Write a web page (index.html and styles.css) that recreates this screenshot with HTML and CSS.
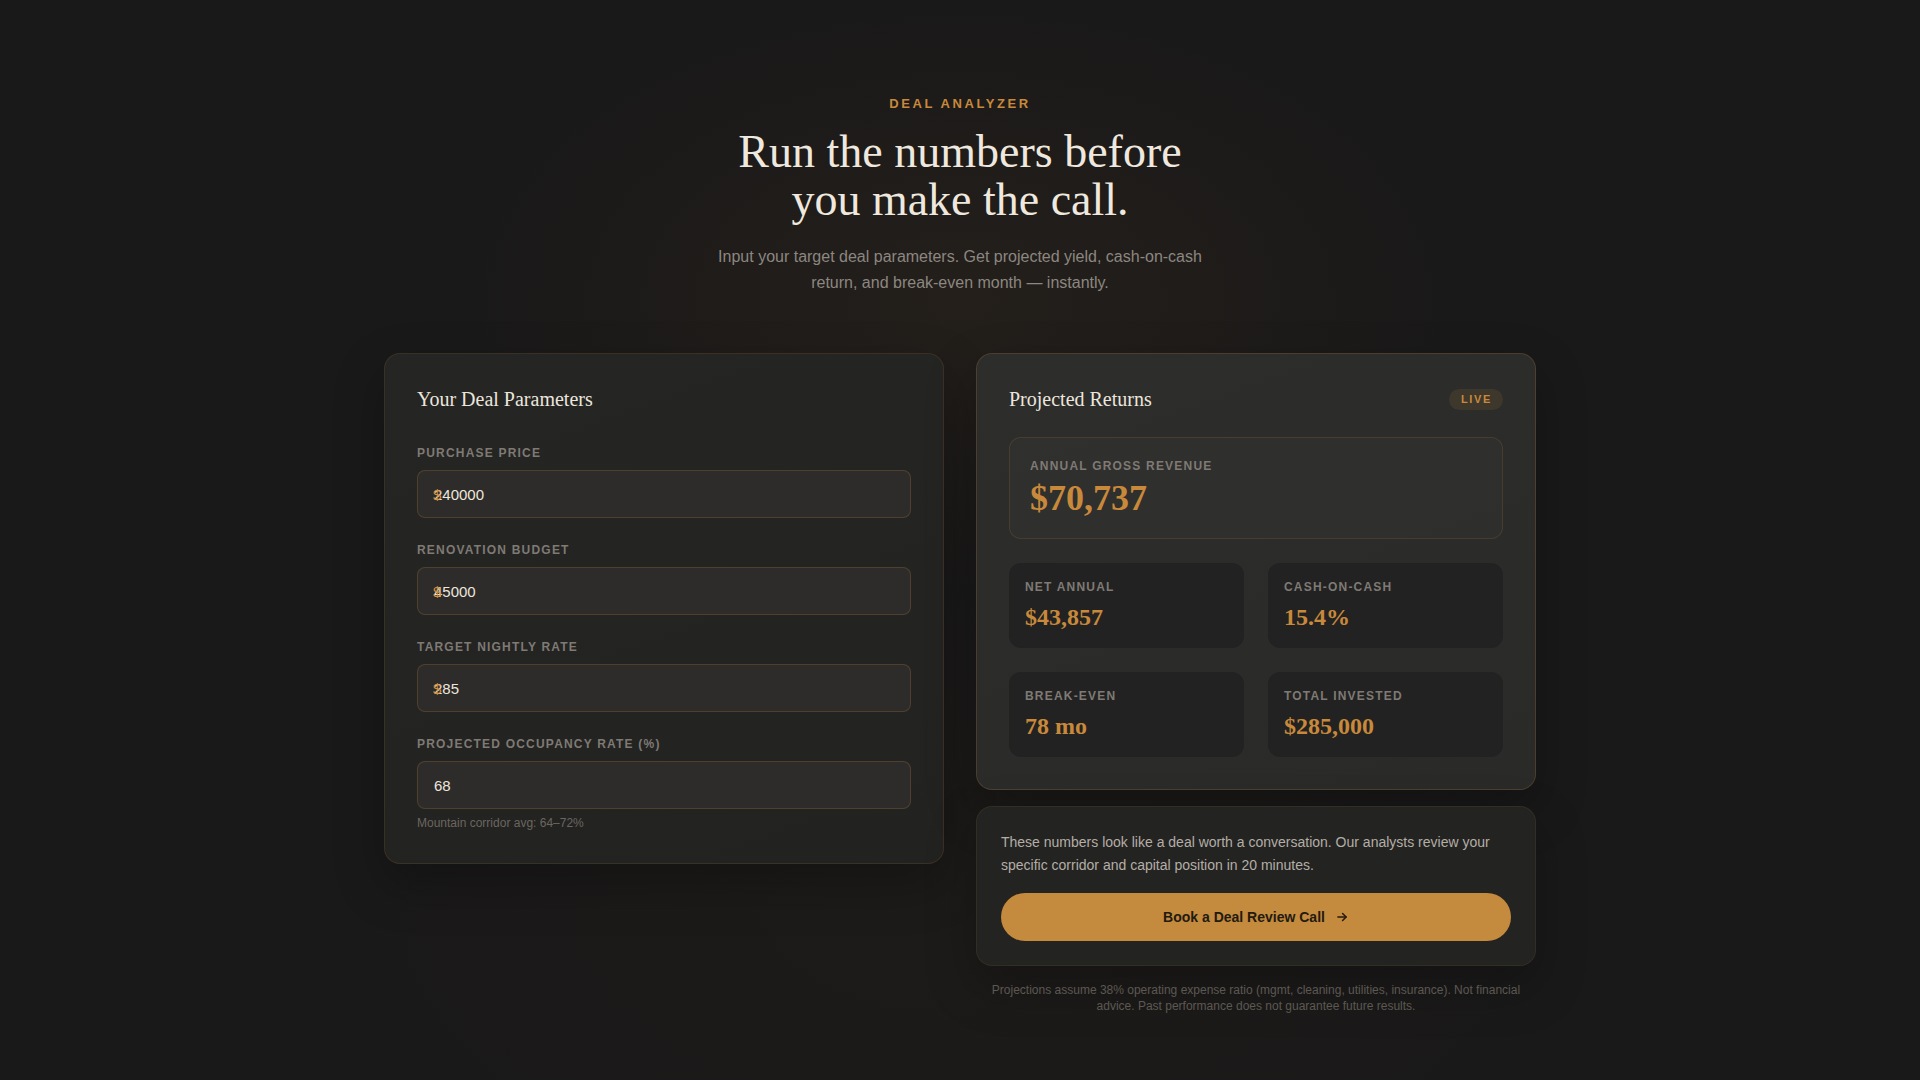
FILE: index.html
```html
<!DOCTYPE html>
<html lang="en">
<head>
    <meta charset="UTF-8">
    <meta name="viewport" content="width=device-width, initial-scale=1.0">
    <title>Deal Analyzer</title>
    <link rel="stylesheet" href="styles.css">
</head>
<body>

    <main class="page">
        <header class="intro">
            <div class="eyebrow">Deal Analyzer</div>
            <h1 class="headline">Run the numbers before<br>you make the call.</h1>
            <p class="lead">Input your target deal parameters. Get projected yield, cash-on-cash return, and break-even month &mdash; instantly.</p>
        </header>

        <section class="analyzer">
            <div class="card params-card">
                <h2 class="card-title">Your Deal Parameters</h2>

                <div class="field">
                    <label class="field-label" for="price">Purchase Price</label>
                    <div class="input-wrap">
                        <span class="prefix">$</span>
                        <input class="field-input" id="price" type="number" value="240000">
                    </div>
                </div>

                <div class="field">
                    <label class="field-label" for="reno">Renovation Budget</label>
                    <div class="input-wrap">
                        <span class="prefix">$</span>
                        <input class="field-input" id="reno" type="number" value="45000">
                    </div>
                </div>

                <div class="field">
                    <label class="field-label" for="rate">Target Nightly Rate</label>
                    <div class="input-wrap">
                        <span class="prefix">$</span>
                        <input class="field-input" id="rate" type="number" value="285">
                    </div>
                </div>

                <div class="field last">
                    <label class="field-label" for="occ">Projected Occupancy Rate (%)</label>
                    <div class="input-wrap">
                        <input class="field-input" id="occ" type="number" value="68">
                    </div>
                    <div class="hint">Mountain corridor avg: 64&ndash;72%</div>
                </div>
            </div>

            <div class="side">
                <div class="card returns-card">
                    <div class="card-head">
                        <h2 class="card-title">Projected Returns</h2>
                        <span class="live">Live</span>
                    </div>

                    <div class="stat-main">
                        <div class="stat-label">Annual Gross Revenue</div>
                        <div class="stat-value big" id="gross">$70,737</div>
                    </div>

                    <div class="stat-grid">
                        <div class="stat">
                            <div class="stat-label">Net Annual</div>
                            <div class="stat-value" id="net">$43,857</div>
                        </div>
                        <div class="stat">
                            <div class="stat-label">Cash-on-Cash</div>
                            <div class="stat-value" id="coc">15.4%</div>
                        </div>
                        <div class="stat">
                            <div class="stat-label">Break-Even</div>
                            <div class="stat-value" id="breakeven">78 mo</div>
                        </div>
                        <div class="stat">
                            <div class="stat-label">Total Invested</div>
                            <div class="stat-value" id="invested">$285,000</div>
                        </div>
                    </div>
                </div>

                <div class="card cta-card">
                    <p class="cta-text">These numbers look like a deal worth a conversation. Our analysts review your specific corridor and capital position in 20 minutes.</p>
                    <button class="cta-button">
                        Book a Deal Review Call
                        <svg width="14" height="14" viewBox="0 0 24 24" fill="none" stroke="currentColor" stroke-width="2.6" stroke-linecap="round" stroke-linejoin="round"><path d="M5 12h14"/><path d="M13 6l6 6-6 6"/></svg>
                    </button>
                </div>

                <p class="disclaimer">Projections assume 38% operating expense ratio (mgmt, cleaning, utilities, insurance). Not financial advice. Past performance does not guarantee future results.</p>
            </div>
        </section>
    </main>

</body>
</html>
```

FILE: styles.css
```css
* {
    box-sizing: border-box;
}

body {
    margin: 0;
    min-height: 100vh;
    font-family: "Liberation Sans", Arial, sans-serif;
    color: #ece6dd;
    background-color: #1a1919;
    background-image:
        radial-gradient(ellipse 700px 420px at 50% 300px, rgba(120, 82, 40, 0.10), transparent 70%),
        radial-gradient(ellipse 900px 500px at 50% 900px, rgba(60, 45, 30, 0.10), transparent 70%);
}

.page {
    max-width: 1152px;
    margin: 0 auto;
    padding: 94px 0 60px;
}

/* Intro */

.intro {
    text-align: center;
    margin-bottom: 57px;
}

.eyebrow {
    font-size: 13px;
    line-height: 20px;
    font-weight: bold;
    letter-spacing: 0.2em;
    text-transform: uppercase;
    color: #c8893b;
}

.headline {
    margin: 14px 0 20px;
    font-family: "Liberation Serif", "Times New Roman", serif;
    font-weight: normal;
    font-size: 46px;
    line-height: 48px;
    color: #efe8de;
}

.lead {
    max-width: 500px;
    margin: 0 auto;
    font-size: 16px;
    line-height: 26px;
    color: #8c8780;
}

/* Layout */

.analyzer {
    display: grid;
    grid-template-columns: 1fr 1fr;
    gap: 32px;
    align-items: start;
}

.side {
    display: flex;
    flex-direction: column;
    gap: 16px;
}

.card {
    border: 1px solid rgba(201, 138, 58, 0.14);
    border-radius: 16px;
    padding: 32px;
    box-shadow: 0 20px 50px rgba(0, 0, 0, 0.25);
}

.params-card {
    background: linear-gradient(160deg, #252524 0%, #222221 100%);
}

.returns-card {
    background: linear-gradient(160deg, #2d2d2c 0%, #2a2a29 100%);
    border-color: rgba(201, 138, 58, 0.2);
}

.cta-card {
    background: #232322;
    padding: 24px;
    border-color: rgba(201, 138, 58, 0.1);
}

.card-title {
    margin: 0;
    font-family: "Liberation Serif", "Times New Roman", serif;
    font-weight: normal;
    font-size: 20px;
    line-height: 26px;
    color: #ece6dd;
}

.params-card .card-title {
    margin-bottom: 33px;
}

.card-head {
    display: flex;
    justify-content: space-between;
    align-items: center;
    margin-bottom: 25px;
}

.live {
    font-size: 11px;
    line-height: 13px;
    font-weight: bold;
    letter-spacing: 0.15em;
    text-transform: uppercase;
    color: #c8893b;
    background: rgba(201, 138, 58, 0.12);
    border-radius: 999px;
    padding: 4px 11px 4px 12px;
}

/* Fields */

.field {
    margin-bottom: 24px;
}

.field.last {
    margin-bottom: 0;
}

.field-label {
    display: block;
    font-size: 12px;
    line-height: 17px;
    font-weight: bold;
    letter-spacing: 0.1em;
    text-transform: uppercase;
    color: #7f7a74;
    margin-bottom: 8px;
}

.input-wrap {
    position: relative;
}

.prefix {
    position: absolute;
    left: 16px;
    top: 50%;
    transform: translateY(-50%);
    font-size: 15px;
    color: #d3913d;
    pointer-events: none;
}

.field-input {
    display: block;
    width: 100%;
    height: 48px;
    padding: 0 16px;
    font-family: "Liberation Sans", Arial, sans-serif;
    font-size: 15px;
    color: #ece6dd;
    background: #2e2c2a;
    border: 1px solid rgba(201, 138, 58, 0.22);
    border-radius: 8px;
    outline: none;
    -moz-appearance: textfield;
}

.field-input::-webkit-outer-spin-button,
.field-input::-webkit-inner-spin-button {
    -webkit-appearance: none;
    margin: 0;
}

.hint {
    margin-top: 6px;
    font-size: 12px;
    line-height: 16px;
    color: #6b665f;
}

/* Stats */

.stat-main {
    border: 1px solid rgba(201, 138, 58, 0.16);
    border-radius: 12px;
    padding: 20px;
    background: rgba(255, 255, 255, 0.015);
    margin-bottom: 24px;
}

.stat-grid {
    display: grid;
    grid-template-columns: 1fr 1fr;
    gap: 24px;
}

.stat {
    background: #222222;
    border-radius: 12px;
    padding: 16px;
}

.stat-label {
    font-size: 12px;
    line-height: 16px;
    font-weight: bold;
    letter-spacing: 0.1em;
    text-transform: uppercase;
    color: #7f7a74;
}

.stat-value {
    margin-top: 8px;
    font-family: "Liberation Serif", "Times New Roman", serif;
    font-weight: bold;
    font-size: 24px;
    line-height: 29px;
    color: #c8893b;
}

.stat-value.big {
    margin-top: 4px;
    font-size: 36px;
    line-height: 40px;
}

/* Call to action */

.cta-text {
    margin: 0 0 16px;
    font-size: 14px;
    line-height: 23px;
    color: #b4aea6;
}

.cta-button {
    display: flex;
    justify-content: center;
    align-items: center;
    gap: 10px;
    width: 100%;
    height: 48px;
    border: none;
    border-radius: 999px;
    background: #c48a3d;
    color: #231a10;
    font-family: "Liberation Sans", Arial, sans-serif;
    font-size: 14px;
    font-weight: bold;
    cursor: pointer;
}

.cta-button:hover {
    background: #d09444;
}

.disclaimer {
    margin: 0;
    text-align: center;
    font-size: 12px;
    line-height: 16px;
    color: #5c5852;
}
```
